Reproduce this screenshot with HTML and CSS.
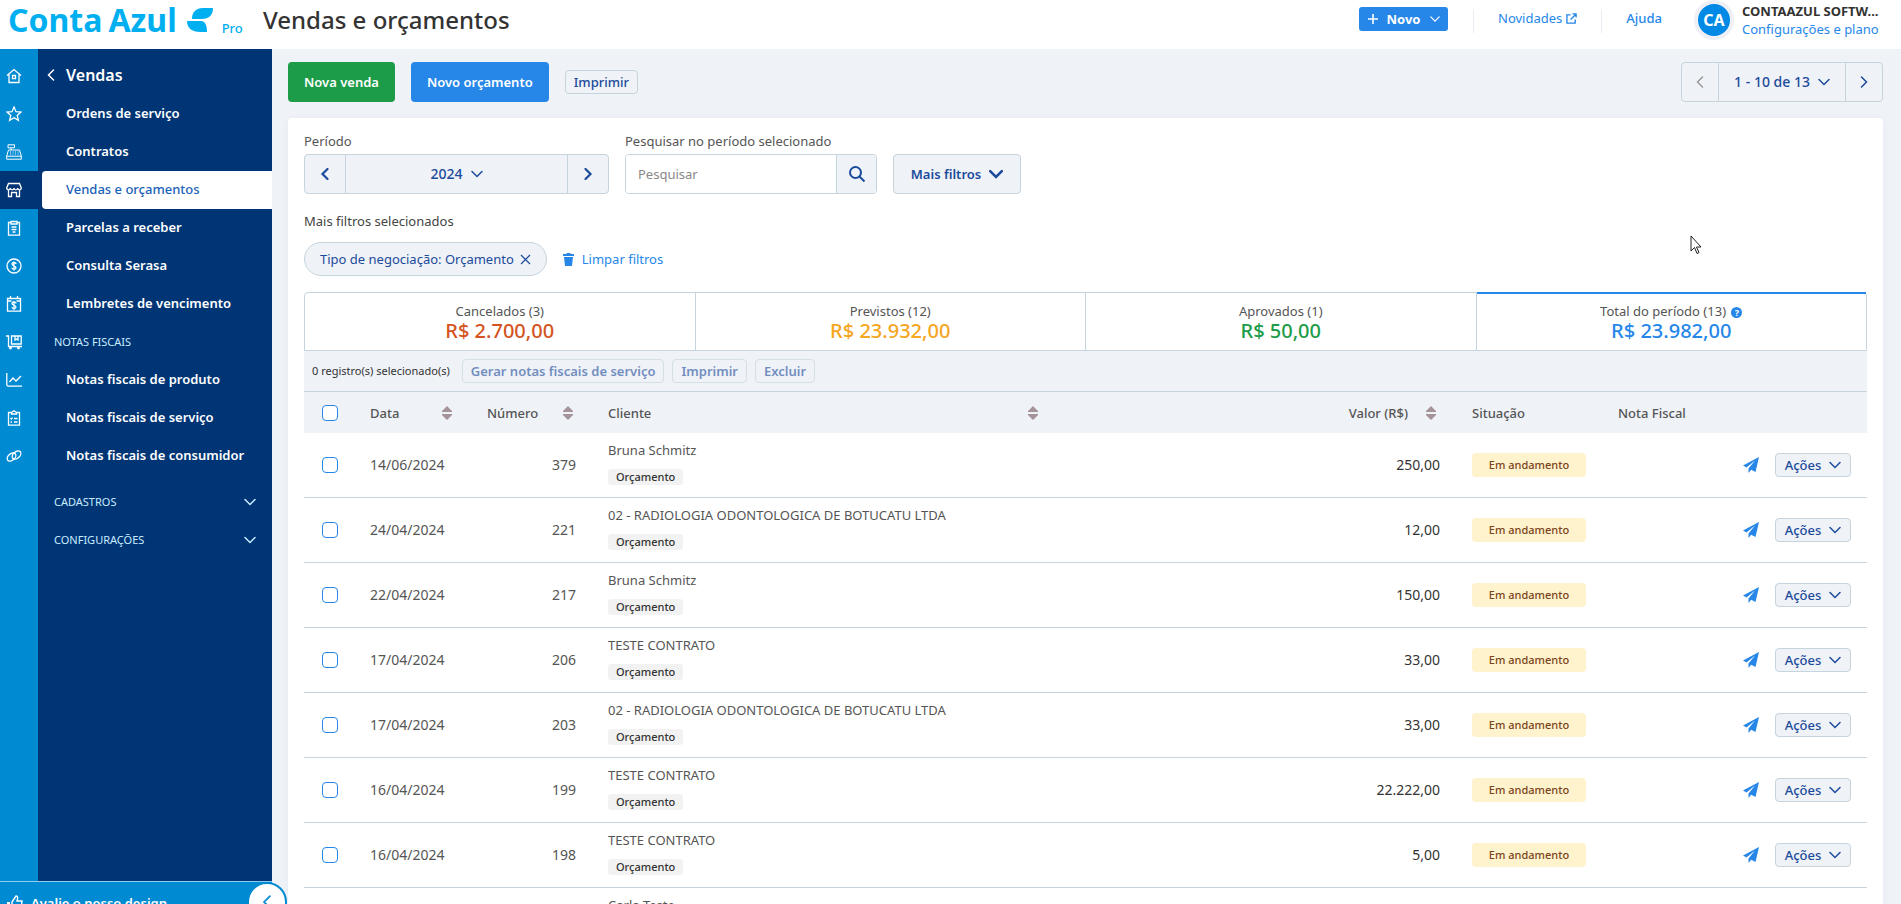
FILE: index.html
```html
<!DOCTYPE html>
<html lang="pt-BR">
<head>
<meta charset="UTF-8">
<meta name="viewport" content="width=device-width, initial-scale=1.0">
<title>Vendas e orçamentos</title>
<link rel="stylesheet" href="styles.css">
</head>
<body>

<!-- Shared icons -->
<svg class="sprite" xmlns="http://www.w3.org/2000/svg">
  <symbol id="down" viewBox="0 0 12 12"><path d="M1 3.5l5 5 5-5" fill="none" stroke="currentColor" stroke-linecap="round"/></symbol>
  <symbol id="left" viewBox="0 0 12 12"><path d="M8.5 1l-5 5 5 5" fill="none" stroke="currentColor" stroke-linecap="round"/></symbol>
  <symbol id="right" viewBox="0 0 12 12"><path d="M3.5 1l5 5-5 5" fill="none" stroke="currentColor" stroke-linecap="round"/></symbol>
  <symbol id="sort" viewBox="0 0 10 14"><path d="M5 0L10 5v1H0V5zM0 8h10v1l-5 5-5-5z" fill="#a4949a"/></symbol>
  <symbol id="plane" viewBox="0 0 16 16"><path d="M16 0L0 8.500l3.500 2L12 3.500 5.500 11.500V16l2.700-3.200L12.500 15z" fill="currentColor"/></symbol>
</svg>

<header class="topbar">
  <a href="#" class="logo">
    <span class="logo-name"><span>Conta</span><span>Azul</span></span>
    <svg class="logo-leaf" viewBox="0 0 26 24"><path d="M5 11C5 4 9 0 16 0h10c0 7-4 11-11 11zM0 13h14c4 0 6 4 6 11h-7C5 24 0 20 0 13z" fill="#00aff0"/></svg>
    <span class="logo-plan">Pro</span>
  </a>
  <h1>Vendas e orçamentos</h1>
  <nav class="topbar-nav">
    <button class="btn-novo">
      <svg width="10" height="10" viewBox="0 0 10 10"><path d="M5 0v10M0 5h10" stroke="#fff" stroke-width="1.6"/></svg>
      Novo
      <svg class="icon" width="10" height="10"><use href="#down"/></svg>
    </button>
    <a href="#" class="nav-link nav-news">Novidades
      <svg width="11" height="11" viewBox="0 0 12 12"><path d="M5 2H1v9h9V7M7 1h4v4M11 1L5 7" fill="none" stroke="currentColor" stroke-width="1.5"/></svg>
    </a>
    <a href="#" class="nav-link nav-help">Ajuda</a>
  </nav>
  <div class="account">
    <div class="avatar">CA</div>
    <div class="account-text">
      <strong>CONTAAZUL SOFTW...</strong>
      <a href="#">Configurações e plano</a>
    </div>
  </div>
</header>

<div class="layout">
  <aside class="sidebar">
    <nav class="rail">
      <a href="#" aria-label="Início"><svg viewBox="0 0 16 16"><path d="M1 7.5L8 1.5l7 6M3 6.5V14.5h10V6.5M6.5 7.5h3v3h-3z"/></svg></a>
      <a href="#" aria-label="Favoritos"><svg viewBox="0 0 16 16"><path d="M8 1l2 4.700 5 .4-3.800 3.300 1.200 5L8 11.700l-4.400 2.700 1.200-5L1 6.100l5-.4z"/></svg></a>
      <a href="#" aria-label="Caixa"><svg class="thin" viewBox="0 0 16 16"><path d="M2 .8h6.500v3H2zM5 4v2M2.500 6h11l1.800 6v3.200H.7V12zM.8 12.200h14.400M4 8h1M6.500 8h1M9 8h1M11.500 8h1M4 10h1M6.500 10h1M9 10h1M11.500 10h1"/></svg></a>
      <a href="#" class="current" aria-label="Vendas"><svg viewBox="0 0 16 16"><path d="M2.500 1.500h11l1.800 4.500c0 2.400-3.400 2.400-3.600 0-.2 2.400-3.500 2.400-3.700 0-.2 2.400-3.500 2.400-3.700 0-.2 2.400-3.600 2.400-3.600 0zM2.500 8v6.500h3v-4h5v4h3V8"/></svg></a>
      <a href="#" aria-label="Financeiro"><svg viewBox="0 0 16 16"><path d="M5 2.500H2.500v12.700h11V2.500H11M5 1.500h6v2.500H5zM5.500 7h5M5.500 9.500h5M6.500 12h3"/></svg></a>
      <a href="#" aria-label="Conta"><svg viewBox="0 0 16 16"><circle cx="8" cy="8" r="7"/><path d="M10 6c0-2-4-2-4 0s4 1.800 4 3.800-4 2-4 0M8 3.500v9"/></svg></a>
      <a href="#" aria-label="Agenda"><svg viewBox="0 0 16 16"><path d="M1.500 2.500h13v12.700h-13zM1.500 5h4M10.500 5h4M4.500 0v3M11.500 0v3M10 7.500c0-2-4-2-4 0s4 1.500 4 3.500-4 2-4 0M8 5v9"/></svg></a>
      <a href="#" aria-label="Estoque"><svg viewBox="0 0 16 16"><path d="M0 2h2.500v10.500H16M5.500 2h9.700v8H5.500zM9 2v4l1.500-1L12 6V2"/><circle cx="4.500" cy="14" r=".8"/><circle cx="12.500" cy="14" r=".8"/></svg></a>
      <a href="#" aria-label="Relatórios"><svg viewBox="0 0 16 16"><path d="M.8 1v11.500c0 1 .7 1.700 1.700 1.700H16M3.500 10L7 6l3 3 5-5"/></svg></a>
      <a href="#" aria-label="Notas"><svg viewBox="0 0 16 16"><path d="M5.500 2.500h-3v12.700h11V2.500h-3M5.500 4V2.500L8 .8l2.500 1.700V4zM4.500 8l1 1 1-1.500M8 8.500h3.500M4.500 12h1.500M8 12h3.500"/></svg></a>
      <a href="#" aria-label="Integrações"><svg viewBox="0 0 16 16"><ellipse cx="5.500" cy="9" rx="5" ry="3.200" transform="rotate(-40 5.500 9)"/><ellipse cx="10.500" cy="7" rx="5" ry="3.200" transform="rotate(-40 10.500 7)"/></svg></a>
    </nav>
    <nav class="menu">
      <a href="#" class="menu-title"><svg class="icon" width="12" height="12"><use href="#left"/></svg>Vendas</a>
      <a href="#">Ordens de serviço</a>
      <a href="#">Contratos</a>
      <a href="#" class="active">Vendas e orçamentos</a>
      <a href="#">Parcelas a receber</a>
      <a href="#">Consulta Serasa</a>
      <a href="#">Lembretes de vencimento</a>
      <span class="menu-group">NOTAS FISCAIS</span>
      <a href="#">Notas fiscais de produto</a>
      <a href="#">Notas fiscais de serviço</a>
      <a href="#">Notas fiscais de consumidor</a>
      <div class="menu-folded">
        <button class="menu-group">CADASTROS <svg class="icon" width="12" height="12"><use href="#down"/></svg></button>
        <button class="menu-group">CONFIGURAÇÕES <svg class="icon" width="12" height="12"><use href="#down"/></svg></button>
      </div>
    </nav>
    <div class="sidebar-footer">
      <a href="#">
        <svg width="16" height="16" viewBox="0 0 16 16"><path d="M5 7l4-6c2 0 2 2 1 5h5l-1 8H5z" fill="none" stroke="#fff" stroke-width="1.4"/><path d="M0 7h3v8H0z" fill="#fff"/></svg>
        Avalie o nosso design
      </a>
      <button class="collapse" aria-label="Recolher menu"><svg class="icon" width="14" height="14"><use href="#left"/></svg></button>
    </div>
  </aside>

  <main>
    <div class="toolbar">
      <button class="btn btn-green">Nova venda</button>
      <button class="btn btn-blue">Novo orçamento</button>
      <button class="btn-small">Imprimir</button>
      <div class="segmented pager">
        <button disabled aria-label="Anterior"><svg class="icon" width="12" height="12"><use href="#left"/></svg></button>
        <button class="segmented-main">1 - 10 de 13 <svg class="icon" width="12" height="12"><use href="#down"/></svg></button>
        <button aria-label="Próxima"><svg class="icon" width="12" height="12"><use href="#right"/></svg></button>
      </div>
    </div>

    <section class="card">
      <div class="filters">
        <div class="field">
          <span class="label">Período</span>
          <div class="segmented period">
            <button aria-label="Ano anterior"><svg class="icon icon-bold" width="12" height="12"><use href="#left"/></svg></button>
            <button class="segmented-main">2024 <svg class="icon" width="12" height="12"><use href="#down"/></svg></button>
            <button aria-label="Próximo ano"><svg class="icon icon-bold" width="12" height="12"><use href="#right"/></svg></button>
          </div>
        </div>
        <div class="field">
          <label class="label" for="search">Pesquisar no período selecionado</label>
          <div class="search">
            <input type="text" id="search" placeholder="Pesquisar">
            <button aria-label="Pesquisar"><svg width="18" height="18" viewBox="0 0 18 18"><circle cx="7.500" cy="7.500" r="5.500" fill="none" stroke="currentColor" stroke-width="2"/><path d="M11.500 11.500L16.500 16.500" stroke="currentColor" stroke-width="2"/></svg></button>
          </div>
        </div>
        <button class="more-filters">Mais filtros <svg class="icon icon-bold" width="14" height="14"><use href="#down"/></svg></button>
      </div>

      <p class="selected-label">Mais filtros selecionados</p>
      <div class="selected-filters">
        <button class="chip">Tipo de negociação: Orçamento
          <svg width="11" height="11" viewBox="0 0 11 11"><path d="M1 1l9 9M10 1l-9 9" stroke="currentColor" stroke-width="1.2"/></svg>
        </button>
        <a href="#" class="clear">
          <svg width="11" height="13" viewBox="0 0 11 13"><path d="M0 1h3l1-1h3l1 1h3v2H0zM1 4h9l-1 9H2z" fill="currentColor"/></svg>
          Limpar filtros
        </a>
      </div>

      <div class="totals">
        <button class="total"><span>Cancelados (3)</span><strong class="red">R$ 2.700,00</strong></button>
        <button class="total"><span>Previstos (12)</span><strong class="yellow">R$ 23.932,00</strong></button>
        <button class="total"><span>Aprovados (1)</span><strong class="green">R$ 50,00</strong></button>
        <button class="total selected"><span>Total do período (13) <i class="help">?</i></span><strong class="blue">R$ 23.982,00</strong></button>
      </div>

      <div class="bulk">
        <span>0 registro(s) selecionado(s)</span>
        <button class="btn-small" disabled>Gerar notas fiscais de serviço</button>
        <button class="btn-small" disabled>Imprimir</button>
        <button class="btn-small" disabled>Excluir</button>
      </div>

      <table>
        <thead>
          <tr>
            <th class="col-check"><input type="checkbox" aria-label="Selecionar todos"></th>
            <th class="col-date"><div class="sortable">Data <svg width="10" height="14"><use href="#sort"/></svg></div></th>
            <th class="col-number"><div class="sortable">Número <svg width="10" height="14"><use href="#sort"/></svg></div></th>
            <th class="col-client"><div class="sortable">Cliente <svg width="10" height="14"><use href="#sort"/></svg></div></th>
            <th class="col-value"><div class="sortable">Valor (R$) <svg width="10" height="14"><use href="#sort"/></svg></div></th>
            <th class="col-status">Situação</th>
            <th class="col-invoice">Nota Fiscal</th>
            <th class="col-actions"></th>
          </tr>
        </thead>
        <tbody id="rows"></tbody>
      </table>
    </section>
  </main>
</div>

<svg class="cursor" width="12" height="20" viewBox="0 0 12 20"><path d="M1 1v15l3.500-3.500L7 18.500l2-1-2.500-5.500H11z" fill="#fff" stroke="#222" stroke-width="1"/></svg>

<script>
  const sales = [
    ['14/06/2024', '379', 'Bruna Schmitz', '250,00'],
    ['24/04/2024', '221', '02 - RADIOLOGIA ODONTOLOGICA DE BOTUCATU LTDA', '12,00'],
    ['22/04/2024', '217', 'Bruna Schmitz', '150,00'],
    ['17/04/2024', '206', 'TESTE CONTRATO', '33,00'],
    ['17/04/2024', '203', '02 - RADIOLOGIA ODONTOLOGICA DE BOTUCATU LTDA', '33,00'],
    ['16/04/2024', '199', 'TESTE CONTRATO', '22.222,00'],
    ['16/04/2024', '198', 'TESTE CONTRATO', '5,00'],
    ['', '', 'Carla Teste', '']
  ];

  document.getElementById('rows').innerHTML = sales.map(([date, number, client, value]) => `
    <tr>
      <td><input type="checkbox" aria-label="Selecionar ${number}"></td>
      <td class="date">${date}</td>
      <td class="number">${number}</td>
      <td class="client">${client}<span class="tag">Orçamento</span></td>
      <td class="value">${value}</td>
      <td><span class="status">Em andamento</span></td>
      <td></td>
      <td>
        <div class="row-actions">
          <a href="#" aria-label="Enviar"><svg width="16" height="16"><use href="#plane"/></svg></a>
          <button class="btn-small">Ações <svg class="icon" width="12" height="12"><use href="#down"/></svg></button>
        </div>
      </td>
    </tr>
  `).join('');
</script>

</body>
</html>
```

FILE: styles.css
```css
* {
  box-sizing: border-box;
}

body {
  font-family: "Noto Sans", sans-serif;
  font-size: 13px;
  line-height: 18px;
  color: #555;
  margin: 0;
  height: 100vh;
  display: flex;
  flex-direction: column;
  overflow: hidden;
  background-color: #eff2f7;
}

a {
  color: #2687e9;
  text-decoration: none;
}

button, input {
  font: inherit;
  color: inherit;
}

button {
  display: inline-flex;
  align-items: center;
  justify-content: center;
  padding: 0;
  background: none;
  border: none;
  cursor: pointer;
  white-space: nowrap;
}

svg {
  flex: none;
}

.sprite {
  display: none;
}

.icon {
  stroke-width: 1.5;
}

.icon-bold {
  stroke-width: 2.2;
}

/* Top bar */
.topbar {
  flex: none;
  display: flex;
  align-items: flex-start;
  height: 49px;
  padding: 0 18px 0 8px;
  background-color: #fff;
}

.logo {
  display: flex;
  width: 255px;
  height: 40px;
  align-items: center;
  color: #00aff0;
}

.logo-name {
  display: flex;
  gap: 6px;
  margin-right: 10px;
  font-size: 32px;
  font-weight: 700;
}

.logo-leaf {
  width: 26px;
  height: 24px;
}

.logo-plan {
  align-self: flex-end;
  margin: 0 0 3px 9px;
  font-weight: 500;
}

h1 {
  margin: 0;
  font-size: 24px;
  font-weight: 500;
  line-height: 40px;
  color: #333;
}

.topbar-nav {
  display: flex;
  margin: 7px 32px 0 auto;
}

.btn-novo {
  width: 89px;
  height: 24px;
  margin-right: 25px;
  gap: 9px;
  background-color: #2687e9;
  color: #fff;
  border-radius: 3px;
  font-weight: 700;
}

.nav-link {
  height: 24px;
  margin-top: 2px;
  padding: 0 24px;
  border-left: 1px solid #e8ebf1;
}

.nav-news {
  display: flex;
  gap: 4px;
}

.nav-news svg {
  margin-top: 4px;
}

.nav-help {
  font-weight: 500;
  padding-right: 0;
}

.account {
  display: flex;
  gap: 8px;
}

.avatar {
  width: 40px;
  height: 40px;
  border: 4px solid #eef0f5;
  border-radius: 50%;
  background-color: #0089e5;
  color: #fff;
  font-size: 16px;
  font-weight: 700;
  line-height: 32px;
  text-align: center;
}

.account-text {
  display: flex;
  flex-direction: column;
  width: 141px;
  margin-top: 2px;
  white-space: nowrap;
}

.account-text strong {
  font-weight: 700;
  color: #333;
}

/* Sidebar */
.layout {
  flex: 1;
  display: flex;
  min-height: 0;
}

.sidebar {
  position: relative;
  flex: none;
  display: flex;
  width: 272px;
  background-color: #003575;
}

.rail {
  width: 38px;
  padding-top: 8px;
  background-color: #008ad2;
}

.rail a {
  display: flex;
  align-items: center;
  height: 38px;
  padding-left: 6px;
}

.rail .current {
  background-color: #003575;
}

.rail svg {
  width: 16px;
  height: 16px;
  fill: none;
  stroke: #fff;
  stroke-width: 1.3;
}

.rail .thin {
  stroke-width: 1;
}

.menu {
  flex: 1;
  padding: 8px 0 0 4px;
}

.menu a {
  display: flex;
  align-items: center;
  height: 38px;
  padding: 0 0 2px 24px;
  color: #fff;
  font-weight: 600;
}

.menu .menu-title {
  gap: 9px;
  padding-left: 3px;
  font-size: 16px;
}

.menu .active {
  background-color: #fff;
  color: #1a62b8;
  border-radius: 4px 0 0 4px;
  font-weight: 500;
}

.menu-group {
  display: flex;
  align-items: center;
  justify-content: space-between;
  width: 100%;
  height: 38px;
  padding: 0 16px 0 12px;
  color: #c9ecff;
  font-size: 11px;
}

.menu-folded {
  margin-top: 8px;
}

.sidebar-footer {
  position: absolute;
  left: 0;
  right: 0;
  bottom: -20px;
  height: 43px;
  padding-left: 7px;
  background-color: #008ad2;
  border-top: 1px solid #8fcdf0;
}

.sidebar-footer a {
  display: flex;
  align-items: center;
  gap: 8px;
  height: 42px;
  color: #fff;
  font-weight: 600;
}

.collapse {
  position: absolute;
  right: -15px;
  top: 0;
  width: 40px;
  height: 40px;
  background-color: #fff;
  border: 2px solid #008ad2;
  border-radius: 50%;
  color: #008ad2;
}

/* Content */
main {
  flex: 1;
  min-width: 0;
  padding: 13px 18px 0 16px;
}

.toolbar {
  display: flex;
  align-items: center;
  gap: 16px;
  margin-bottom: 16px;
}

.btn {
  height: 40px;
  padding: 0 16px;
  border-radius: 4px;
  color: #fff;
  font-weight: 600;
}

.btn-green {
  background-color: #1c9c49;
}

.btn-blue {
  background-color: #2687e9;
}

.btn-small {
  height: 24px;
  padding: 0 8px;
  background-color: #eff2f7;
  border: 1px solid #c5d4dd;
  border-radius: 4px;
  color: #1c4b9b;
  font-weight: 500;
}

.segmented {
  display: flex;
  height: 40px;
  background-color: #eff2f7;
  border: 1px solid #c5d4dd;
  border-radius: 4px;
  color: #1c4b9b;
}

.segmented button {
  width: 40px;
}

.segmented .segmented-main {
  flex: 1;
  gap: 8px;
  border: 1px solid #c5d4dd;
  border-width: 0 1px;
  font-size: 14px;
  font-weight: 500;
}

.segmented button:disabled {
  color: #999;
}

.segmented.pager {
  width: 202px;
  margin-left: auto;
}

.pager button {
  width: 36px;
}

.period {
  width: 305px;
}

.card {
  padding: 14px 16px 16px;
  background-color: #fff;
  border-radius: 4px;
  box-shadow: 0 0 8px rgba(0, 40, 90, 0.04);
}

.filters {
  display: flex;
  align-items: flex-end;
  gap: 16px;
}

.label {
  display: block;
  margin-bottom: 4px;
}

.search {
  display: flex;
  width: 252px;
  height: 40px;
  border: 1px solid #c5d4dd;
  border-radius: 4px;
  overflow: hidden;
}

.search input {
  flex: 1;
  min-width: 0;
  padding: 0 12px;
  border: none;
}

.search input::placeholder {
  color: #888;
}

.search button {
  width: 40px;
  background-color: #eff2f7;
  border-left: 1px solid #c5d4dd;
  color: #1c4b9b;
}

.more-filters {
  width: 128px;
  height: 40px;
  gap: 8px;
  background-color: #eff2f7;
  border: 1px solid #c5d4dd;
  border-radius: 4px;
  color: #1c4b9b;
  font-weight: 600;
}

.selected-label {
  margin: 18px 0 12px;
  color: #444;
}

.selected-filters {
  display: flex;
  align-items: center;
  gap: 16px;
  margin-bottom: 16px;
}

.chip {
  height: 34px;
  padding: 0 15px;
  gap: 6px;
  background-color: #eff2f7;
  border: 1px solid #c5d4dd;
  border-radius: 17px;
  color: #1c4b9b;
}

.clear {
  display: flex;
  align-items: center;
  gap: 8px;
}

/* Totals */
.totals {
  display: flex;
  height: 59px;
  border: 1px solid #c5d4dd;
  border-radius: 4px 4px 0 0;
}

.total {
  position: relative;
  flex: 1;
  flex-direction: column;
}

.total + .total {
  border-left: 1px solid #c5d4dd;
}

.total.selected::before {
  content: "";
  position: absolute;
  top: -1px;
  left: 0;
  right: 0;
  height: 2px;
  background-color: #2687e9;
}

.total strong {
  font-size: 20px;
  font-weight: 500;
  line-height: 22px;
}

.red { color: #d4541f; }
.yellow { color: #f5a623; }
.green { color: #1c9c49; }
.blue { color: #2687e9; }

.help {
  display: inline-block;
  width: 11px;
  height: 11px;
  margin-left: 2px;
  border-radius: 50%;
  background-color: #2687e9;
  color: #fff;
  font-size: 9px;
  font-style: normal;
  font-weight: 700;
  line-height: 11px;
}

.bulk {
  display: flex;
  align-items: center;
  gap: 8px;
  height: 41px;
  padding: 0 8px;
  background-color: #eff2f7;
  border-bottom: 1px solid #c5d4dd;
}

.bulk span {
  margin-right: 4px;
  font-size: 11px;
  color: #333;
}

.bulk .btn-small {
  opacity: 0.6;
  font-weight: 600;
}

/* Sales table */
table {
  width: 100%;
  table-layout: fixed;
  border-collapse: separate;
  border-spacing: 0;
}

th {
  height: 41px;
  padding: 0 16px;
  background-color: #eff2f7;
  font-weight: 500;
  text-align: left;
}

.col-check { width: 50px; }
.col-date { width: 117px; }
.col-number { width: 121px; }
.col-value { width: 402px; }
.col-status { width: 146px; }
.col-invoice { width: 125px; }
.col-actions { width: 140px; }

.col-date, .col-number {
  padding-right: 19px;
}

.sortable {
  display: flex;
  align-items: center;
  justify-content: space-between;
}

.col-value .sortable {
  justify-content: flex-end;
  gap: 18px;
  padding-right: 4px;
}

td {
  height: 65px;
  padding: 0 16px;
  border-bottom: 1px solid #c5d4dd;
}

.client {
  padding-bottom: 4px;
}

.number, .value {
  text-align: right;
}

.date, .number, .value {
  font-size: 14px;
}

.value {
  color: #333;
}

input[type="checkbox"] {
  appearance: none;
  display: block;
  width: 16px;
  height: 16px;
  margin: 0 0 0 2px;
  background-color: #fff;
  border: 1px solid #2687e9;
  border-radius: 4px;
}

.tag {
  display: block;
  width: max-content;
  margin-top: 10px;
  padding: 0 8px;
  background-color: #f2f2f2;
  border-radius: 3px;
  color: #333;
  font-size: 11px;
  font-weight: 500;
  line-height: 16px;
}

.status {
  display: block;
  width: 114px;
  background-color: #fff3cd;
  border-radius: 4px;
  color: #7a4420;
  font-size: 11px;
  font-weight: 500;
  line-height: 24px;
  text-align: center;
}

.row-actions {
  display: flex;
  align-items: center;
  justify-content: flex-end;
  gap: 16px;
}

.row-actions a {
  display: flex;
}

.row-actions .btn-small {
  width: 76px;
  gap: 8px;
}

/* Pointer over the page */
.cursor {
  position: absolute;
  top: 235px;
  right: 199px;
}
```
